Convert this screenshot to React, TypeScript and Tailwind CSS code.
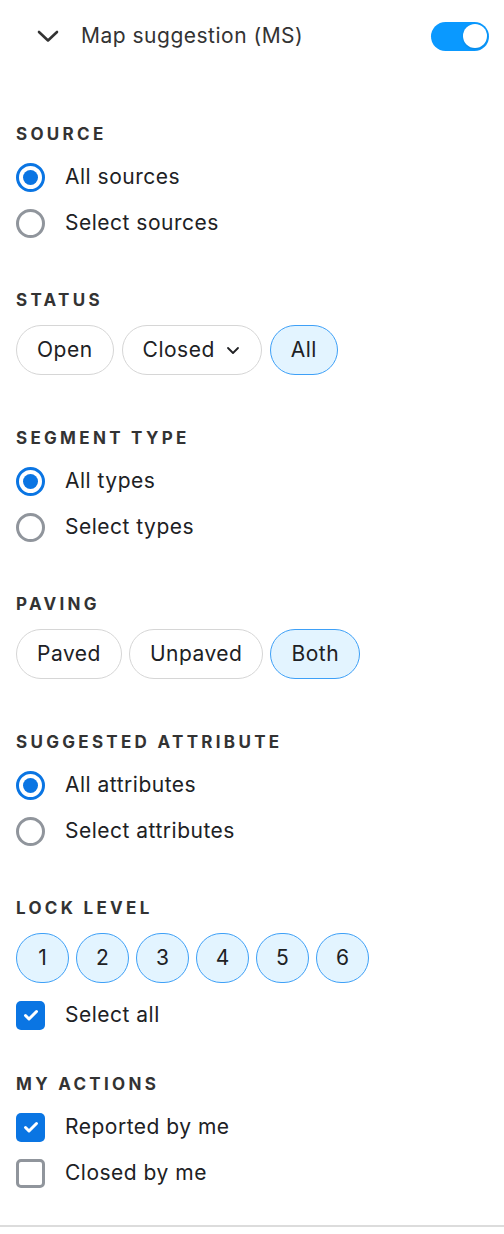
import { useState } from 'react'

const font = { fontFamily: 'Inter, "Noto Sans", sans-serif' }

function SectionLabel({ children }: { children: string }) {
  return (
    <div className="h-5 text-[17px] leading-[22px] font-bold tracking-[3.3px] text-[#333]">
      {children}
    </div>
  )
}

function Radio({ label, checked }: { label: string; checked?: boolean }) {
  return (
    <div className="flex items-center h-[46px] gap-5">
      {checked ? (
        <span className="w-[29px] h-[29px] rounded-full border-[3px] border-[#0a75e3] flex items-center justify-center">
          <span className="w-[15px] h-[15px] rounded-full bg-[#0a75e3]" />
        </span>
      ) : (
        <span className="w-[29px] h-[29px] rounded-full border-[3px] border-[#90959c]" />
      )}
      <span className="text-[21px] tracking-[0.5px] text-[#202124]">{label}</span>
    </div>
  )
}

function Check({ label, checked }: { label: string; checked?: boolean }) {
  return (
    <div className="flex items-center h-[46px] gap-5">
      {checked ? (
        <span className="w-[29px] h-[29px] rounded-[5px] bg-[#0a75e3] flex items-center justify-center">
          <svg width="18" height="18" viewBox="0 0 18 18" fill="none">
            <path d="M3.5 9.5l3.5 3.5L14.5 5.5" stroke="white" strokeWidth="3" strokeLinecap="round" strokeLinejoin="round" />
          </svg>
        </span>
      ) : (
        <span className="w-[29px] h-[29px] rounded-[5px] border-[3px] border-[#90959c]" />
      )}
      <span className="text-[21px] tracking-[0.5px] text-[#202124]">{label}</span>
    </div>
  )
}

function Chip({ label, active, dropdown }: { label: string; active?: boolean; dropdown?: boolean }) {
  return (
    <button
      className={
        active
          ? 'h-[50px] px-5 rounded-full border border-[#3ea0f7] bg-[#e3f4ff] text-[21px] tracking-[0.5px] text-[#202124] flex items-center gap-[10px]'
          : 'h-[50px] px-5 rounded-full border border-[#d6d6d6] bg-white text-[21px] tracking-[0.5px] text-[#202124] flex items-center gap-[10px]'
      }
    >
      {label}
      {dropdown && (
        <svg width="16" height="16" viewBox="0 0 16 16" fill="none">
          <path d="M3 6l5 5 5-5" stroke="#202124" strokeWidth="1.8" strokeLinecap="round" strokeLinejoin="round" />
        </svg>
      )}
    </button>
  )
}

export default function App() {
  const [on] = useState(true)
  return (
    <div className="w-[504px] h-[1234px] bg-white" style={font}>
      {/* Header */}
      <div className="flex items-center h-[72px] pl-[37px] pr-[15px]">
        <svg width="22" height="14" viewBox="0 0 22 14" fill="none">
          <path d="M2 3l9 8.5L20 3" stroke="#333" strokeWidth="2.6" strokeLinecap="round" strokeLinejoin="round" />
        </svg>
        <span className="ml-[22px] text-[21px] tracking-[0.5px] text-[#333] flex-1">Map suggestion (MS)</span>
        <span
          className={
            on
              ? 'w-[58px] h-[29px] rounded-full bg-[#0a99ff] flex items-center justify-end pr-[2px]'
              : 'w-[58px] h-[29px] rounded-full bg-gray-300 flex items-center pl-[2px]'
          }
        >
          <span className="w-[24px] h-[24px] rounded-full bg-white shadow-sm" />
        </span>
      </div>

      <div className="px-4">
        <div className="mt-[51px]">
          <SectionLabel>SOURCE</SectionLabel>
          <div className="mt-[11px]">
            <Radio label="All sources" checked />
            <Radio label="Select sources" />
          </div>
        </div>

        <div className="mt-[43px]">
          <SectionLabel>STATUS</SectionLabel>
          <div className="mt-4 flex gap-2">
            <Chip label="Open" />
            <Chip label="Closed" dropdown />
            <Chip label="All" active />
          </div>
        </div>

        <div className="mt-[52px]">
          <SectionLabel>SEGMENT TYPE</SectionLabel>
          <div className="mt-[11px]">
            <Radio label="All types" checked />
            <Radio label="Select types" />
          </div>
        </div>

        <div className="mt-[43px]">
          <SectionLabel>PAVING</SectionLabel>
          <div className="mt-4 flex gap-[7px]">
            <Chip label="Paved" />
            <Chip label="Unpaved" />
            <Chip label="Both" active />
          </div>
        </div>

        <div className="mt-[52px]">
          <SectionLabel>SUGGESTED ATTRIBUTE</SectionLabel>
          <div className="mt-[11px]">
            <Radio label="All attributes" checked />
            <Radio label="Select attributes" />
          </div>
        </div>

        <div className="mt-[43px]">
          <SectionLabel>LOCK LEVEL</SectionLabel>
          <div className="mt-4 flex gap-[7px]">
            {[1, 2, 3, 4, 5, 6].map((n) => (
              <span
                key={n}
                className="w-[53px] h-[50px] rounded-full border border-[#3ea0f7] bg-[#e3f4ff] text-[21px] text-[#202124] flex items-center justify-center"
              >
                {n}
              </span>
            ))}
          </div>
          <div className="mt-[9px]">
            <Check label="Select all" checked />
          </div>
        </div>

        <div className="mt-[35px]">
          <SectionLabel>MY ACTIONS</SectionLabel>
          <div className="mt-[11px]">
            <Check label="Reported by me" checked />
            <Check label="Closed by me" />
          </div>
        </div>
      </div>

      <div className="mt-[29px] border-t-2 border-[#dcdcdc]" />
    </div>
  )
}
